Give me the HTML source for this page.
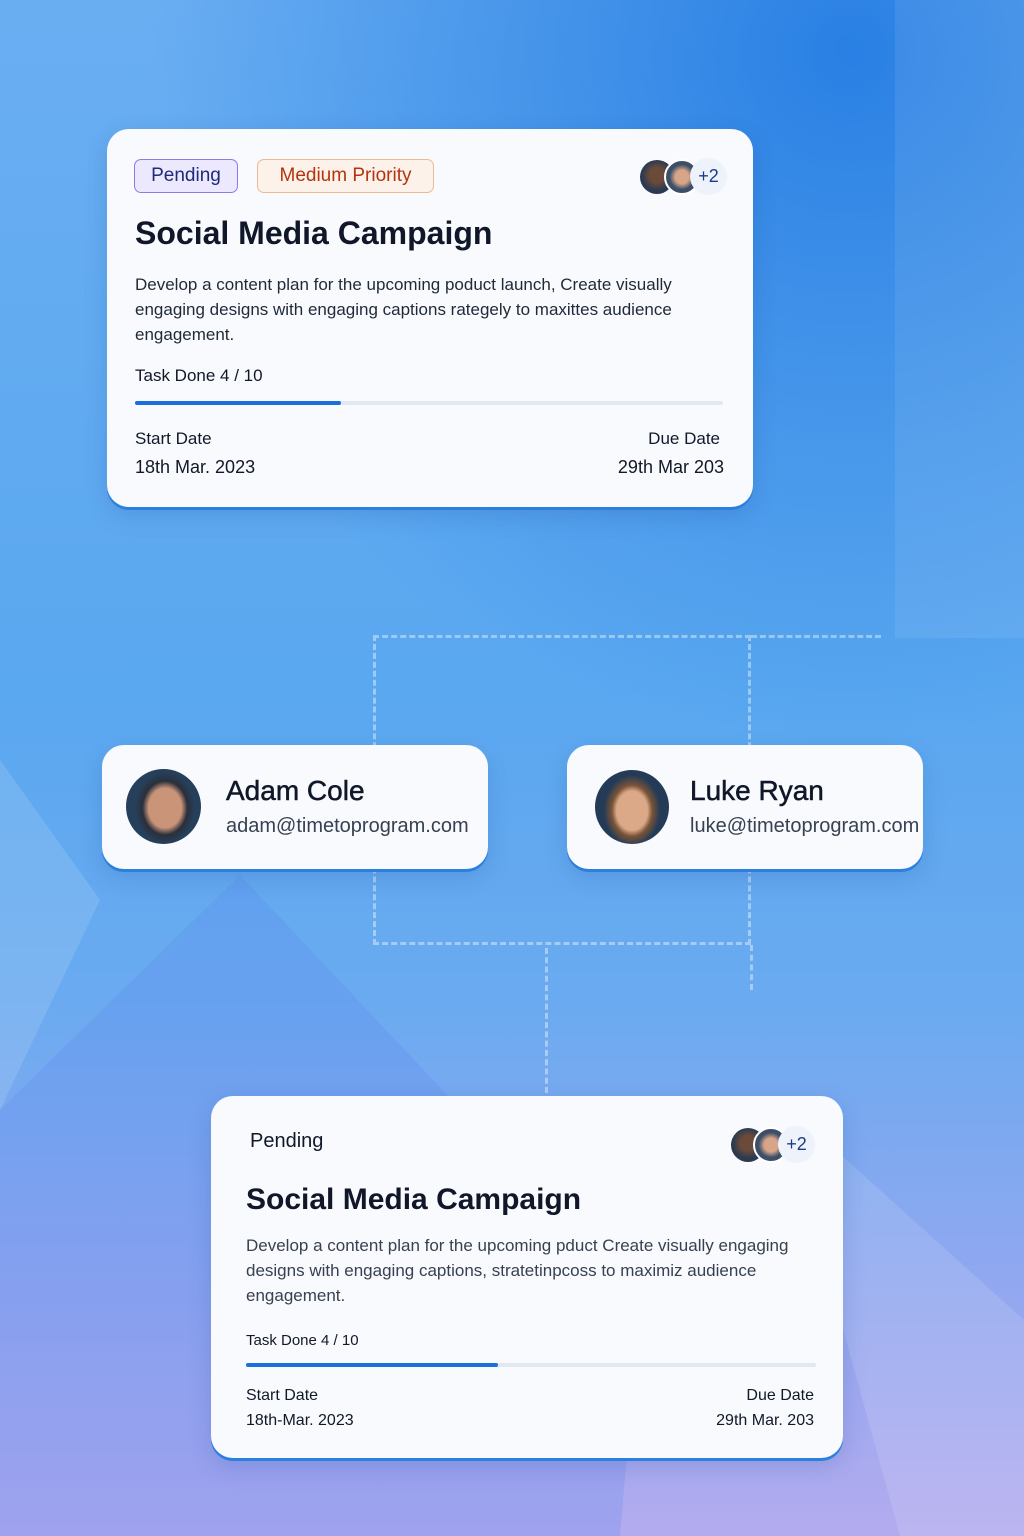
<!DOCTYPE html>
<html><head><meta charset="utf-8"><style>
*{margin:0;padding:0;box-sizing:border-box}
body{width:1024px;height:1536px;overflow:hidden;position:relative;font-family:"Liberation Sans",sans-serif;
background:radial-gradient(ellipse 700px 700px at 850px 50px,rgba(30,120,225,.85),rgba(30,120,225,0)),
linear-gradient(180deg,#6aaef2 0%,#5aa8f0 45%,#6aaaf0 65%,#94a8f0 85%,#b3abef 100%);}
.bg{position:absolute;inset:0;overflow:hidden}
.card{position:absolute;background:#f8fafe;border-radius:22px;box-shadow:0 3px 0 #2b7fdd,0 8px 24px rgba(20,60,140,.18);color:#111827}
.tag{position:absolute;height:34px;border-radius:7px;font-size:19px;line-height:32px;text-align:center}
.av{position:absolute;border-radius:50%;overflow:hidden}
.bar{position:absolute;height:4px;border-radius:2px;background:#e2e8f2}
.bar i{position:absolute;left:0;top:0;height:4px;border-radius:2px;background:#1a6fdc}
.t{position:absolute;white-space:nowrap}
.dash{position:absolute;border:0 dashed rgba(255,255,255,.4)}
.nm{-webkit-text-stroke:.5px #0f1729}
</style></head><body>
<div class="bg">
<svg width="1024" height="1536" style="position:absolute;left:0;top:0">
<polygon points="895,0 1024,0 1024,638 895,638" fill="rgba(255,255,255,.08)"/>
<polygon points="240,875 0,1110 0,1536 620,1536 640,1300" fill="rgba(90,130,235,.22)"/>
<polygon points="0,760 100,900 0,1110" fill="rgba(255,255,255,.12)"/>
<polygon points="780,1100 1024,1320 1024,1536 900,1536" fill="rgba(255,255,255,.12)"/>
</svg>
</div>
<div class="dash" style="left:373px;top:635px;width:378px;height:310px;border-width:3px"></div>
<div class="dash" style="left:751px;top:635px;width:130px;height:0;border-top-width:3px"></div>
<div class="dash" style="left:750px;top:945px;width:0;height:45px;border-left-width:3px"></div>
<div class="dash" style="left:545px;top:948px;width:0;height:145px;border-left-width:3px"></div>

<div class="card" style="left:107px;top:129px;width:646px;height:378px">
 <div class="tag" style="left:27px;top:30px;width:104px;background:#ece8fd;border:1.5px solid #8b7be8;color:#1e2a7a">Pending</div>
 <div class="tag" style="left:150px;top:30px;width:177px;background:#fdf2ea;border:1.5px solid #f0b792;color:#b3340f">Medium Priority</div>
 <div class="av" style="left:533px;top:31px;width:34px;height:34px;background:radial-gradient(circle at 50% 45%,#6b4a3a 0 30%,#2b3a50 60%)"></div>
 <div class="av" style="left:557px;top:30px;width:36px;height:36px;border:2px solid #fff;background:radial-gradient(circle at 50% 50%,#d8a588 0 30%,#3c4f68 55%)"></div>
 <div class="av" style="left:583px;top:29px;width:37px;height:37px;background:#eef2fb;color:#1e3a8a;font-size:18px;line-height:37px;text-align:center">+2</div>
 <div class="t" style="left:28px;top:86px;font-size:32px;font-weight:bold;color:#0f1729">Social Media Campaign</div>
 <div style="position:absolute;left:28px;top:143px;width:580px;font-size:17px;line-height:25px;color:#1f2937">Develop a content plan for the upcoming poduct launch, Create visually engaging designs with engaging captions rategely to maxittes audience engagement.</div>
 <div class="t" style="left:28px;top:237px;font-size:17px">Task Done 4 / 10</div>
 <div class="bar" style="left:28px;top:272px;width:588px"><i style="width:206px"></i></div>
 <div class="t" style="left:28px;top:300px;font-size:17px">Start Date</div>
 <div class="t" style="left:28px;top:328px;font-size:18px">18th Mar. 2023</div>
 <div class="t" style="right:33px;top:300px;font-size:17px">Due Date</div>
 <div class="t" style="right:29px;top:328px;font-size:18px">29th Mar 203</div>
</div>

<div class="card" style="left:102px;top:745px;width:386px;height:124px">
 <div class="av" style="left:24px;top:24px;width:75px;height:75px;background:radial-gradient(ellipse 40% 48% at 52% 52%,#c99478 0 55%,#2a2f3a 75%,#26405c 100%)"></div>
 <div class="t nm" style="left:124px;top:30px;font-size:28px;color:#0f1729">Adam Cole</div>
 <div class="t" style="left:124px;top:70px;font-size:20px;color:#374151">adam@timetoprogram.com</div>
</div>
<div class="card" style="left:567px;top:745px;width:356px;height:124px">
 <div class="av" style="left:28px;top:25px;width:74px;height:74px;background:radial-gradient(ellipse 38% 48% at 50% 55%,#dba988 0 55%,#7a5336 72%,#243b57 100%)"></div>
 <div class="t nm" style="left:123px;top:30px;font-size:28px;color:#0f1729">Luke Ryan</div>
 <div class="t" style="left:123px;top:70px;font-size:20px;color:#374151">luke@timetoprogram.com</div>
</div>

<div class="card" style="left:211px;top:1096px;width:632px;height:362px">
 <div class="t" style="left:39px;top:34px;font-size:20px;color:#111827">Pending</div>
 <div class="av" style="left:520px;top:32px;width:34px;height:34px;background:radial-gradient(circle at 50% 45%,#6b4a3a 0 30%,#2b3a50 60%)"></div>
 <div class="av" style="left:542px;top:31px;width:36px;height:36px;border:2px solid #fff;background:radial-gradient(circle at 50% 50%,#d8a588 0 30%,#3c4f68 55%)"></div>
 <div class="av" style="left:567px;top:30px;width:37px;height:37px;background:#eef2fb;color:#1e3a8a;font-size:18px;line-height:37px;text-align:center">+2</div>
 <div class="t" style="left:35px;top:87px;font-size:30px;font-weight:bold;color:#0f1729">Social Media Campaign</div>
 <div style="position:absolute;left:35px;top:137px;width:570px;font-size:17px;line-height:25px;color:#374151">Develop a content plan for the upcoming pduct Create visually engaging designs with engaging captions, stratetinpcoss to maximiz audience engagement.</div>
 <div class="t" style="left:35px;top:236px;font-size:15px">Task Done 4 / 10</div>
 <div class="bar" style="left:35px;top:267px;width:570px"><i style="width:252px"></i></div>
 <div class="t" style="left:35px;top:291px;font-size:16px">Start Date</div>
 <div class="t" style="left:35px;top:316px;font-size:16px">18th-Mar. 2023</div>
 <div class="t" style="right:29px;top:291px;font-size:16px">Due Date</div>
 <div class="t" style="right:29px;top:316px;font-size:16px">29th Mar. 203</div>
</div>
</body></html>
